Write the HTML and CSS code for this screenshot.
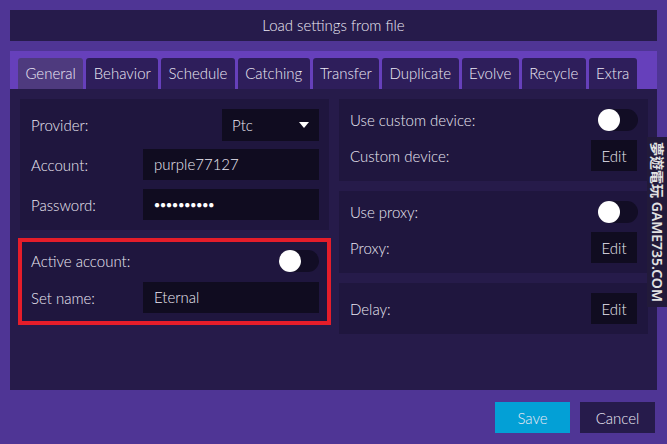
FILE: index.html
```html
<!DOCTYPE html>
<html lang="en">
<head>
<meta charset="UTF-8" />
<title>Settings</title>
<link rel="stylesheet" href="styles.css">
</head>
<body>

<div class="top-bar">Load settings from file</div>

<div class="tabs">
    <div class="tab active">General</div>
    <div class="tab">Behavior</div>
    <div class="tab">Schedule</div>
    <div class="tab">Catching</div>
    <div class="tab">Transfer</div>
    <div class="tab">Duplicate</div>
    <div class="tab">Evolve</div>
    <div class="tab">Recycle</div>
    <div class="tab">Extra</div>
</div>

<div class="content">
    <!-- left column -->
    <div class="column">
        <div class="group">
            <div class="row">
                <span class="label">Provider:</span>
                <div class="select">Ptc <span class="arrow"></span></div>
            </div>
            <div class="row">
                <span class="label">Account:</span>
                <div class="input">purple77127</div>
            </div>
            <div class="row">
                <span class="label">Password:</span>
                <div class="input dots">●●●●●●●●●●</div>
            </div>
        </div>

        <div class="group marked">
            <div class="row short">
                <span class="label">Active account:</span>
                <span class="toggle"><span class="knob"></span></span>
            </div>
            <div class="row">
                <span class="label">Set name:</span>
                <div class="input">Eternal</div>
            </div>
        </div>
    </div>

    <!-- right column -->
    <div class="column">
        <div class="group">
            <div class="row short">
                <span class="label">Use custom device:</span>
                <span class="toggle"><span class="knob"></span></span>
            </div>
            <div class="row">
                <span class="label">Custom device:</span>
                <button class="edit">Edit</button>
            </div>
        </div>

        <div class="group">
            <div class="row short">
                <span class="label">Use proxy:</span>
                <span class="toggle"><span class="knob"></span></span>
            </div>
            <div class="row">
                <span class="label">Proxy:</span>
                <button class="edit">Edit</button>
            </div>
        </div>

        <div class="group">
            <div class="row">
                <span class="label">Delay:</span>
                <button class="edit">Edit</button>
            </div>
        </div>
    </div>
</div>

<div class="footer">
    <button class="btn save">Save</button>
    <button class="btn cancel">Cancel</button>
</div>

<div class="watermark">夢遊電玩 GAME735.COM</div>

</body>
</html>
```

FILE: styles.css
```css
body {
    font-family: Lato, "Open Sans", sans-serif;
    font-size: 15px;
    font-weight: 300;
    background: #4f3595;
    color: #ece9f4;
    margin: 0;
    padding: 10px;
    height: 444px;
    box-sizing: border-box;
    overflow: hidden;
}
.top-bar {
    background: #261b4b;
    height: 31px;
    line-height: 31px;
    text-align: center;
    margin-bottom: 10px;
}
.tabs {
    background: #6640bb;
    padding: 7px 8px 0;
    display: flex;
    gap: 3px;
}
.tab {
    background: #2e1e5b;
    height: 31px;
    line-height: 31px;
    padding: 0 7.4px;
    border-radius: 3px 3px 0 0;
}
.tab.active {
    background: #4e3a7e;
}
.content {
    background: #261b4a;
    height: 301px;
    box-sizing: border-box;
    padding: 10px 9px 10px 10px;
    display: flex;
    gap: 10px;
}
.column {
    width: 309px;
    display: flex;
    flex-direction: column;
    gap: 10px;
}
.group {
    background: #1f163e;
    padding: 10px 10px 10px 11px;
    display: flex;
    flex-direction: column;
    gap: 9px;
}
.group.marked {
    outline: 4px solid #e51d2a;
    outline-offset: -2px;
    gap: 10px;
}
.row {
    display: flex;
    align-items: center;
    justify-content: space-between;
    height: 31px;
}
.row.short {
    height: 22px;
}
.label {
    flex: 1;
}
.input {
    background: #100c20;
    width: 176px;
    height: 31px;
    line-height: 31px;
    padding-left: 11px;
    box-sizing: border-box;
}
.dots {
    font-family: "DejaVu Sans", sans-serif;
    font-size: 10px;
    color: #fff;
}
.select {
    background: #100c20;
    width: 97px;
    height: 32px;
    padding: 0 10px;
    box-sizing: border-box;
    display: flex;
    align-items: center;
    justify-content: space-between;
}
.arrow {
    width: 0;
    height: 0;
    border-left: 5px solid transparent;
    border-right: 5px solid transparent;
    border-top: 6px solid #fff;
}
.toggle {
    width: 40px;
    height: 22px;
    border-radius: 11px;
    background: #120d25;
    display: flex;
    align-items: center;
}
.knob {
    width: 22px;
    height: 22px;
    border-radius: 50%;
    background: #fff;
}
.edit {
    background: #100c20;
    color: inherit;
    border: none;
    font: inherit;
    width: 46px;
    height: 31px;
    padding: 0;
    margin-right: 1px;
}
.footer {
    display: flex;
    justify-content: flex-end;
    gap: 10px;
    margin-top: 12px;
    padding-right: 2px;
}
.btn {
    border: none;
    width: 75px;
    height: 31px;
    font: inherit;
    color: inherit;
    padding: 0;
}
.save {
    background: #03a0d6;
}
.cancel {
    background: #261b4b;
}
.watermark {
    position: absolute;
    top: 137px;
    right: 0;
    width: 20px;
    height: 170px;
    background: #221a3a;
    color: #e2e2e2;
    writing-mode: vertical-rl;
    text-orientation: sideways;
    white-space: nowrap;
    font-family: "Noto Sans", "Noto Sans CJK TC", sans-serif;
    font-size: 14px;
    font-weight: 600;
    line-height: 20px;
    text-align: center;
}
```
